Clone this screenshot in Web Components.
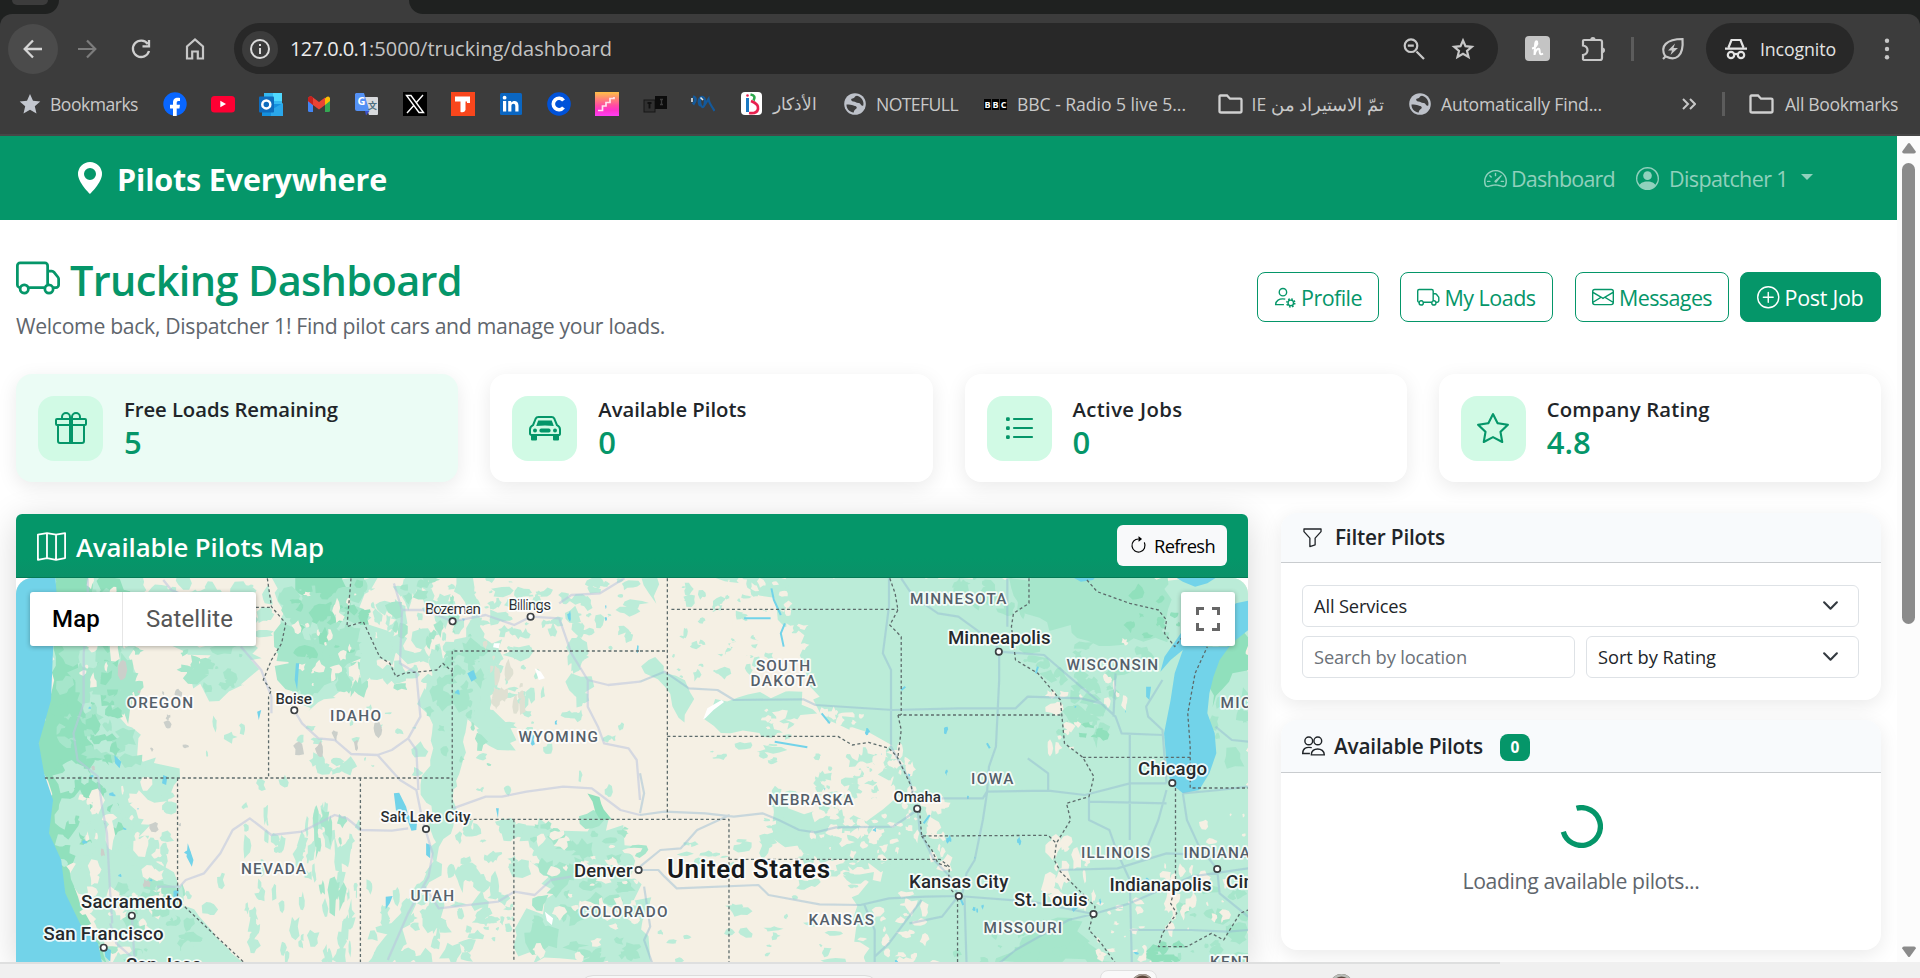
<!DOCTYPE html>
<html lang="en">
<head>
<meta charset="utf-8">
<title>Pilots Everywhere - Trucking Dashboard</title>
<style>
html,body{margin:0;height:100%;overflow:hidden;background:#fff}
body{font-family:"Open Sans","Noto Sans",sans-serif;color:#212529}
</style>
</head>
<body>
<app-window></app-window>
<script>
const define=(name,html,after)=>{
  const t=document.createElement('template');t.innerHTML=html;
  customElements.define(name,class extends HTMLElement{
    constructor(){super();this.attachShadow({mode:'open'}).append(t.content.cloneNode(true));}
    connectedCallback(){if(after)after.call(this,this.shadowRoot);}
  });
};

/* Text set in a box of a given width: tracking takes up the difference. */
define('fit-text','<style>:host{display:inline-block;white-space:pre;flex:none}span{display:inline-block}</style><span><slot></slot></span>',function(r){
  const w=+this.getAttribute('w'),s=r.firstElementChild.nextElementSibling;
  if(this.hasAttribute('size'))this.style.fontSize=this.getAttribute('size')+'px';
  this.style.width=w+'px';
  const nat=s.getBoundingClientRect().width,n=[...this.textContent].length;
  if(this.hasAttribute('scale'))this.style.fontSize=parseFloat(getComputedStyle(this).fontSize)*w/nat+'px';
  else s.style.letterSpacing=(w-nat)/n+'px';
});

const ICONS={
pin:'<path d="M8 16s6-5.686 6-10A6 6 0 0 0 2 6c0 4.314 6 10 6 10m0-7a3 3 0 1 1 0-6 3 3 0 0 1 0 6"/>',
truck:'<path d="M0 3.5A1.5 1.5 0 0 1 1.5 2h9A1.5 1.5 0 0 1 12 3.5V5h1.02a1.5 1.5 0 0 1 1.17.563l1.481 1.85a1.5 1.5 0 0 1 .329.938V10.5a1.5 1.5 0 0 1-1.5 1.5H14a2 2 0 1 1-4 0H5a2 2 0 1 1-3.998-.085A1.5 1.5 0 0 1 0 10.5zm1.294 7.456A2 2 0 0 1 4.732 11h5.536a2 2 0 0 1 .732-.732V3.5a.5.5 0 0 0-.5-.5h-9a.5.5 0 0 0-.5.5v7a.5.5 0 0 0 .294.456M12 10a2 2 0 0 1 1.732 1h.768a.5.5 0 0 0 .5-.5V8.35a.5.5 0 0 0-.11-.312l-1.48-1.85A.5.5 0 0 0 13.02 6H12zm-9 1a1 1 0 1 0 0 2 1 1 0 0 0 0-2m9 0a1 1 0 1 0 0 2 1 1 0 0 0 0-2"/>',
speed:'<path d="M8 4a.5.5 0 0 1 .5.5V6a.5.5 0 0 1-1 0V4.5A.5.5 0 0 1 8 4M3.732 5.732a.5.5 0 0 1 .707 0l.915.914a.5.5 0 1 1-.708.708l-.914-.915a.5.5 0 0 1 0-.707M2 10a.5.5 0 0 1 .5-.5h1.586a.5.5 0 0 1 0 1H2.5A.5.5 0 0 1 2 10m9.5 0a.5.5 0 0 1 .5-.5h1.5a.5.5 0 0 1 0 1H12a.5.5 0 0 1-.5-.5m.754-4.246a.39.39 0 0 0-.527-.02L7.547 9.31a.91.91 0 1 0 1.302 1.258l3.434-4.297a.39.39 0 0 0-.029-.518z"/><path fill-rule="evenodd" d="M0 10a8 8 0 1 1 15.547 2.661c-.442 1.253-1.845 1.602-2.932 1.25C11.309 13.488 9.475 13 8 13c-1.474 0-3.31.488-4.615.911-1.087.352-2.49.003-2.932-1.25A8 8 0 0 1 0 10m8-7a7 7 0 0 0-6.603 9.329c.203.575.923.876 1.68.63C4.397 12.533 6.358 12 8 12s3.604.532 4.923.96c.757.245 1.477-.056 1.68-.631A7 7 0 0 0 8 3"/>',
person:'<path d="M11 6a3 3 0 1 1-6 0 3 3 0 0 1 6 0"/><path fill-rule="evenodd" d="M0 8a8 8 0 1 1 16 0A8 8 0 0 1 0 8m8-7a7 7 0 0 0-5.468 11.37C3.242 11.226 4.805 10 8 10s4.757 1.225 5.468 2.37A7 7 0 0 0 8 1"/>',
gear:'<g fill="none" stroke="currentColor"><circle cx="6.5" cy="4.5" r="2.7"/><path d="M8.2 9.6C3.6 8.7 1.2 11 1.2 13.5h6"/><circle cx="12.2" cy="12.3" r="2"/><circle cx="12.2" cy="12.3" r="2.9" stroke-width="1.1" stroke-dasharray="1.2 1.077"/></g>',
mail:'<path d="M0 4a2 2 0 0 1 2-2h12a2 2 0 0 1 2 2v8a2 2 0 0 1-2 2H2a2 2 0 0 1-2-2zm2-1a1 1 0 0 0-1 1v.217l7 4.2 7-4.2V4a1 1 0 0 0-1-1zm13 2.383-4.708 2.825L15 11.105zm-.034 6.876-5.64-3.471L8 9.583l-1.326-.795-5.64 3.47A1 1 0 0 0 2 13h12a1 1 0 0 0 .966-.741M1 11.105l4.708-2.897L1 5.383z"/>',
plus:'<path d="M8 15A7 7 0 1 1 8 1a7 7 0 0 1 0 14m0 1A8 8 0 1 0 8 0a8 8 0 0 0 0 16"/><path d="M8 4a.5.5 0 0 1 .5.5v3h3a.5.5 0 0 1 0 1h-3v3a.5.5 0 0 1-1 0v-3h-3a.5.5 0 0 1 0-1h3v-3A.5.5 0 0 1 8 4"/>',
gift:'<path d="M3 2.5a2.5 2.5 0 0 1 5 0 2.5 2.5 0 0 1 5 0v.006c0 .07 0 .27-.038.494H15a1 1 0 0 1 1 1v2a1 1 0 0 1-1 1v7.5a1.5 1.5 0 0 1-1.5 1.5h-11A1.5 1.5 0 0 1 1 14.5V7a1 1 0 0 1-1-1V4a1 1 0 0 1 1-1h2.038A3 3 0 0 1 3 2.506zm1.068.5H7v-.5a1.5 1.5 0 1 0-3 0c0 .085.002.274.045.43zM9 3h2.932l.023-.07c.043-.156.045-.345.045-.43a1.5 1.5 0 0 0-3 0zM1 4v2h6V4zm8 0v2h6V4zm5 3H9v8h4.5a.5.5 0 0 0 .5-.5zm-7 8V7H2v7.5a.5.5 0 0 0 .5.5z"/>',
car:'<path d="M4.7 2.5h6.6c.6 0 1.1.3 1.4.9l1.3 3.2c.9.4 1.5 1.3 1.5 2.2v1.9c0 .5-.3.8-.8.8H1.3c-.5 0-.8-.3-.8-.8V8.800c0-1 .6-1.800 1.500-2.200l1.300-3.200c.3-.6.8-.9 1.400-.9Z" fill="none" stroke="currentColor"/><path d="M4.600 4.300h6.800l1 2.700q-4.400-.5-8.800 0zM1 11h3v2.700a.5.5 0 0 1-.5.5h-2a.5.5 0 0 1-.5-.5zM12 11h3v2.700a.5.5 0 0 1-.5.5h-2a.5.5 0 0 1-.5-.5z"/><circle cx="3" cy="9.300" r="1"/><circle cx="13" cy="9.300" r="1"/><rect x="5.200" y="8.300" width="5.600" height="2" rx=".9"/>',
list:'<g><rect x="1.500" y="2.600" width="1.900" height="1.900" rx=".6"/><rect x="1.500" y="7.100" width="1.900" height="1.900" rx=".6"/><rect x="1.500" y="11.600" width="1.900" height="1.900" rx=".6"/><path d="M5.500 3.500h9M5.500 8h9M5.500 12.500h9" stroke="currentColor" stroke-width="1.100" stroke-linecap="round"/></g>',
star:'<path fill-rule="evenodd" d="M2.866 14.85c-.078.444.36.791.746.593l4.39-2.256 4.389 2.256c.386.198.824-.149.746-.592l-.83-4.73 3.522-3.356c.33-.314.16-.888-.282-.95l-4.898-.696L8.465.792a.513.513 0 0 0-.927 0L5.354 5.12l-4.898.696c-.441.062-.612.636-.283.95l3.523 3.356-.83 4.73zm4.905-2.767-3.686 1.894.694-3.957a.56.56 0 0 0-.163-.505L1.71 6.745l4.052-.576a.53.53 0 0 0 .393-.288L8 2.223l1.847 3.658a.53.53 0 0 0 .393.288l4.052.575-2.906 2.77a.56.56 0 0 0-.163.506l.694 3.957-3.686-1.894a.5.5 0 0 0-.461 0z"/>',
map:'<path d="M.5 1.500 5.500.6 10.500 1.500 15.500.6V14.400L10.500 15.400 5.500 14.400.5 15.400ZM5.500.6V14.400M10.500 1.500V15.400" fill="none" stroke="currentColor" stroke-linejoin="round"/>',
funnel:'<path d="M1.500 1.500h13v2l-4.500 5V13.600l-4 1.300V8.500l-4.500-5z" fill="none" stroke="currentColor" stroke-linejoin="round"/>',
people:'<g fill="none" stroke="currentColor"><circle cx="4.700" cy="4.800" r="2.700"/><circle cx="11" cy="4.800" r="2.700"/><path d="M6.500 14.500c-.3-5.500 9-5.500 9 0zM5.500 13.500H.5C.5 10 2.500 8.800 6.800 9.500"/></g>',
refresh:'<path fill-rule="evenodd" d="M8 3a5 5 0 1 0 4.546 2.914.5.5 0 0 1 .908-.417A6 6 0 1 1 8 2z"/><path d="M8 4.466V.534a.25.25 0 0 1 .41-.192l2.36 1.966c.12.1.12.284 0 .384L8.41 4.658A.25.25 0 0 1 8 4.466"/>',
chev:'<path d="m2 5 6 6 6-6" fill="none" stroke="#343a40" stroke-width="2" stroke-linecap="round" stroke-linejoin="round"/>'
};
define('app-icon','<style>:host{display:inline-flex;flex:none}svg{display:block;overflow:visible}</style><svg viewBox="0 0 16 16" fill="currentColor"></svg>',function(r){
  const s=r.querySelector('svg'),z=this.getAttribute('size');
  s.setAttribute('width',z);s.setAttribute('height',z);s.innerHTML=ICONS[this.getAttribute('name')];
});

/* ---------- browser frame ---------- */
/* Lays out [left, width, markup] entries as a flex row, each spaced from the one before. */
const row=items=>{let end=0;return items.map(([x,w,h])=>{const m=x-end;end=x+w;return `<div style="width:${w}px;margin-left:${m}px">${h}</div>`}).join('')};
const svg=(w,h,b,vb)=>`<svg width="${w}" height="${h}" viewBox="${vb||`0 0 ${w} ${h}`}">${b}</svg>`;
const line=(d,c='#c7c7c7',sw=2.2)=>`<path d="${d}" fill="none" stroke="${c}" stroke-width="${sw}"/>`;
const ft=(w,t,size,x='')=>`<fit-text w="${w}" size="${size}" ${x}>${t}</fit-text>`;
const globe=svg(22,22,'<circle cx="11" cy="11" r="10.800" fill="#bdc1c9"/><path d="M2.500 11.500c3 0 5 0 7 1s3 .2 3.300 2.300c-1 2-2.800 1.600-3 4.700C5 19 2.300 15 2.500 11.500ZM13 2.700c-3 .4-2 2.500-4.500 2.800s-1 3 1 3 2.500 1.500 5 1.500 2 3.500 4.800 2.500C20.500 8 17 3.500 13 2.700Z" fill="#3c3c3c"/>');
const folder=svg(25,20,line('M1.500 17.500V2.500Q1.500 1.500 2.500 1.500H9l3 3.200H22Q23.500 4.700 23.500 6V17Q23.500 18.500 22 18.500H3Q1.500 18.500 1.500 17.500Z','#d0d0d0',2.3));
const txt=(x,y,s,t,f='#fff',e='')=>`<text x="${x}" y="${y}" font-size="${s}" fill="${f}" text-anchor="middle" font-weight="700" ${e}>${t}</text>`;

define('browser-tools',`<style>
:host{display:flex;height:51px;padding-top:9px;align-items:center}
div{flex:none;display:flex;align-items:center;justify-content:center}
svg{display:block;flex:none;overflow:visible}
.round{height:50px;border-radius:25px;background:#4b4b4b}
.omni{height:51px;border-radius:26px;background:#282828;justify-content:flex-start;color:#c3c3c3}
.info{height:36px;border-radius:18px;background:#3c3c3c}
.pill{height:51px;border-radius:26px;background:#282828;color:#e3e3e3;justify-content:flex-start}
</style>`+row([
[8,50,'<div class="round" style="width:50px">'+svg(20,20,line('M19 10H2M10 1.500 1.700 10 10 18.500','#d5d5d5',2.3))+'</div>'],
[77,20,svg(20,20,line('M1 10h17M10 1.500l8.300 8.500-8.300 8.500','#7c7c7c'))],
[131,20,svg(20,20,line('M16.800 5A8.200 8.200 0 1 0 18 12M18 1v6.300h-6.500','#cfcfcf',2.3))],
[185,20,svg(20,22,line('M2 20.500V8.500L10 1.500l8 7V20.500H12.800V13.500H7.200V20.500Z'))],
[234,1264,`<div class="omni" style="width:1264px">`+row([
  [8,36,'<div class="info" style="width:36px">'+svg(22,22,'<circle cx="11" cy="11" r="9" fill="none" stroke="#dcdcdc" stroke-width="2"/><path d="M11 10v6M11 6v2" stroke="#dcdcdc" stroke-width="2"/>')+'</div>'],
  [56,79,ft(79,'127.0.0.1',20,'style="color:#ececec"')],[135,243,ft(243,':5000/trucking/dashboard',20)],
  [1169,22,svg(22,22,line('M13.500 13.500 21 21M4.800 7.700h6','#c7c7c7',2.300)+'<circle cx="8" cy="7.700" r="6.300" fill="none" stroke="#c7c7c7" stroke-width="2.200"/>')],
  [1218,22,svg(22,22,line('M11 2.500 13.500 8.200 19.800 8.800 15 12.900 16.500 19 11 15.700 5.500 19 7 12.900 2.200 8.800 8.500 8.200Z'))]
  ])+'</div>'],
[1525,25,svg(25,25,'<rect width="25" height="25" rx="4" fill="#c4c4c4"/><path d="M7 12.500C10 12 13.500 8.500 12 5.500 10 4 10 9 9.500 19 10 14 14 11 14.500 14 14.700 17 14.800 19.500 18 17.500" fill="none" stroke="#fff" stroke-width="2"/>')],
[1580,26,svg(26,26,line('M3 5Q3 4 4 4H20Q22 4 22 6V22Q22 24 20 24H5Q3 24 3 23V19Q7.500 18 7.500 14.200T3 9.500Z')+'<path d="M10.200 4a2.700 2.900 0 0 1 5.400 0ZM22 11.500a3 2.800 0 0 1 0 5.600Z" fill="#c7c7c7"/>')],
[1631,3,svg(3,24,'<rect width="3" height="24" fill="#5c5c5c"/>')],
[1661,24,svg(24,24,line('M2 22 5.500 18.500M4.500 20C-2 9 6 2 21.500 2 23 20 14 24 5.500 19.800')+'<path d="M14 6.500 7 13.500h4L9.500 18l7.500-7h-4.500Z" fill="#c7c7c7"/>')],
[1706,148,'<div class="pill" style="width:148px">'+row([[19,22,svg(22,22,'<path d="M0 10.700H22M3.500 9.500 6.500 2h9l3 7.500" fill="none" stroke="#e3e3e3" stroke-width="2.200"/><g fill="none" stroke="#e3e3e3" stroke-width="2.200"><circle cx="6" cy="17" r="3.200"/><circle cx="16" cy="17" r="3.200"/><path d="M9 16h4"/></g>')],[54,76,ft(76,'Incognito',17.8)]])+'</div>'],
[1884,6,svg(6,22,'<g fill="#c7c7c7"><circle cx="3" cy="2.700" r="2.200"/><circle cx="3" cy="11" r="2.200"/><circle cx="3" cy="19.300" r="2.200"/></g>')]
]));

define('bookmark-bar',`<style>
:host{display:flex;height:60px;align-items:center;color:#c9c9c9}
div{flex:none;display:flex;align-items:center;justify-content:center}
fit-text{margin-top:-1px}
svg{display:block;flex:none}
</style>`+row([
[19,22,svg(22,22,'<path d="M11 1 14 7.800 21.300 8.500 15.800 13.300 17.500 20.500 11 16.700 4.500 20.500 6.200 13.300.7 8.500 8 7.800Z" fill="#c3c7cf"/>')],
[50,88,ft(88,'Bookmarks',17.6)],
[163,24,svg(24,24,'<circle cx="12" cy="12" r="11.700" fill="#0866ff"/><path d="M10 24v-7.500H7v-3.700h3V11c0-4 2-5.700 7-5v3c-2.500-.2-3.300.2-3.300 2v1.800h3.300l-.6 3.700h-2.700V24Z" fill="#fff"/>')],
[211,24,svg(24,24,'<rect y="4" width="24" height="16.500" rx="3.500" fill="#f03"/><path d="M9.300 8.800 15 12l-5.700 3.300Z" fill="#fff"/>')],
[259,24,svg(24,24,'<rect x="5" y="1" width="18" height="12" fill="#35b8f1"/><rect x="14" y="1" width="9" height="8" fill="#50d9ff"/><path d="M3 12h20v12H3Z" fill="#1490df"/><path d="M12 18 24 11v13H12Z" fill="#2aa7ea"/><rect y="4.500" width="15" height="16" rx="1" fill="#0f6cbd"/><circle cx="7.300" cy="12.400" r="4" fill="none" stroke="#fff" stroke-width="2.500"/>')],
[308,22,svg(22,16,'<path d="M0 3 5 6V16H1.500Q0 16 0 14.500Z" fill="#4285f4"/><path d="M22 3 17 6V16h3.500Q22 16 22 14.500Z" fill="#34a853"/><path d="M17 2.500Q20-1 22 2V5l-5 4Z" fill="#fbbc04"/><path d="M0 5V2Q2-1 5 1.500L11 6l6-4.500V9l-6 4.500L5 9Z" fill="#ea4335"/><path d="M0 5V2Q2-1 5 1.500V9Z" fill="#c5221f"/>')],
[355,24,svg(24,24,'<path d="M8 5H22q1 0 1 1V22q0 1-1 1H14Z" fill="#d8dadd"/><path d="M1 1H9l5.500 18H2Q0 19 0 17V2Z" fill="#5491f5"/><path d="M10 19h4.500L11 23.500Z" fill="#3a50cc"/>'+txt(6.5,13,11,'G')+txt(17.500,17,9,'文','#4f6f80','font-family="Noto Sans CJK SC"'))],
[403,24,svg(24,24,'<rect width="24" height="24" fill="#000"/><path d="M3.500 3.500H8L20.500 20.500H16ZM20 3 13 11M11 13.200 4 21" stroke="#fff" stroke-width="1.400" fill="none"/>')],
[451,24,svg(24,24,'<rect width="24" height="24" fill="#f9461c"/><path d="M4 4.500H19V11H16v-1.500h-1.500V18q-1 3-5 2V9.500H4Z" fill="#fff"/>')],
[500,22,svg(22,22,'<rect width="22" height="22" rx="1.500" fill="#0a66c2"/><path d="M3 8h3.200v10.500H3ZM8.200 8h3v1.500C13 7 18.500 7 18.500 12.500v6h-3.200V13c0-3.300-3.900-3-3.900 0v5.500H8.200Z" fill="#fff"/><circle cx="4.600" cy="4.700" r="1.900" fill="#fff"/>')],
[547,24,svg(24,24,'<circle cx="12" cy="12" r="11.800" fill="#0052d9"/><path d="M16.500 8.500A5.700 5.700 0 1 0 16.500 15.500" fill="none" stroke="#fff" stroke-width="3.600"/>')],
[595,24,svg(24,24,'<defs><linearGradient id="g" x2="0" y2="1"><stop offset="0" stop-color="#ffc047"/><stop offset=".55" stop-color="#ff4ea0"/><stop offset=".75" stop-color="#ff32c8"/><stop offset="1" stop-color="#ff3ff5"/></linearGradient></defs><rect width="24" height="24" fill="url(#g)"/><path d="M3 18.500H7.500V14H11V10.500H15V6.500H19V5" fill="none" stroke="#ffe3ee" stroke-width="1.700"/>')],
[643,24,svg(24,24,'<rect x="1" y="8" width="11" height="12" fill="#303030" stroke="#161616"/><rect x="12" y="4" width="12" height="13" fill="#0c0c0c"/><path d="M4.500 11h4M6.500 11v5.500" stroke="#111" stroke-width="1.800"/><path d="M17 7.500h3M18.500 7v6M17 12.500h3" stroke="#3c3c3c" stroke-width="1.300"/>')],
[691,24,svg(24,24,'<path d="M2 4.500q5 2 0 8" fill="none" stroke="#14599a" stroke-width="2.800"/><path d="M9 14C6 9 9 4 12 5S14 14 12 15 8 9 10 6M13 14 17.500 7C18 12 21 14 23.500 19" fill="none" stroke="#14599a" stroke-width="2.200"/><path d="M1 6v4M9.500 5.500 12 8" stroke="#dfeaf2" stroke-width="1.600"/>')],
[740.500,22,svg(22,24,'<rect width="21" height="23" rx="4" fill="#fff"/><path d="M6.500 6v14" stroke="#1a78c2" stroke-width="3"/><circle cx="6.500" cy="3.500" r="1.300" fill="#e8214f"/><path d="M9.500 2.500q6 1 3 6" stroke="#2da84c" stroke-width="2.700" fill="none"/><path d="M10 9q8 3 7 8t-9 4" stroke="#e8214f" stroke-width="2.700" fill="none"/>')],
[773,44,ft(44,'الأذكار',17,'scale')],
[844,22,globe],[876,82,ft(82,'NOTEFULL',17.6)],
[984,23,svg(23,11,'<g fill="#000"><rect width="7" height="11"/><rect x="8" width="7" height="11"/><rect x="16" width="7" height="11"/></g>'+txt(3.500,8.800,9,'B')+txt(11.500,8.800,9,'B')+txt(19.500,8.800,9,'C'))],
[1017,169,ft(169,'BBC - Radio 5 live 5...',17.6)],
[1218,25,folder],[1253,131,ft(131,'تمّ الاستيراد من IE',17,'scale dir="rtl"')],
[1409,22,globe],[1441,161,ft(161,'Automatically Find...',17.6)],
[1682,14,svg(14,12,line('M1 1 6 6 1 11M8 1l5 5-5 5','#c7c7c7',2))],
[1722,3,svg(3,24,'<rect width="3" height="24" fill="#5c5c5c"/>')],
[1749,25,folder],[1785,113,ft(113,'All Bookmarks',17.6)]
]));

define('browser-chrome',`<style>
:host{display:block;height:136px;background:#1f2120}
.tabs{height:14px;display:flex}
.tabs i{height:14px;width:59px;border-radius:0 0 17px 0;background:#1f2120}
.tabs b{display:block;width:36px;height:5px;margin-left:12px;border-radius:0 0 14px 14px;background:#3c3c3c}
.tabs u{flex:1;margin-left:350px;background:#1f2120;border-radius:0 0 0 17px}
.top{background:linear-gradient(#3c3c3c,#3c3c3c) 40px 0/390px 14px no-repeat}
.bar{height:120px;background:#3c3c3c;border-radius:12px 12px 0 0;border-bottom:2px solid #474747}
</style><div class="top"><div class="tabs"><i><b></b></i><u></u></div></div><div class="bar"><browser-tools></browser-tools><bookmark-bar></bookmark-bar></div>`);

/* ---------- page ---------- */
define('site-nav',`<style>
:host{display:flex;align-items:center;height:84px;background:#059669;color:#fff;padding:0 0 0 74px;box-sizing:border-box}
.brand{font-weight:700;margin:2px 0 0 11px;flex:none}
.links{margin-left:auto;margin-right:84px;display:flex;align-items:center;color:rgba(255,255,255,.56)}
.caret{border:6px solid transparent;border-top-color:currentColor;border-bottom:0;margin:-2px 0 0 13px}
</style><app-icon name="pin" size="32"></app-icon><fit-text class="brand" w="270" size="30.500">Pilots Everywhere</fit-text>
<div class="links"><app-icon name="speed" size="23"></app-icon><fit-text w="104" size="21.500" style="margin-left:4px">Dashboard</fit-text><app-icon name="person" size="23" style="margin-left:21px"></app-icon><fit-text w="119" size="21.500" style="margin-left:10px">Dispatcher 1</fit-text><span class="caret"></span></div>`);

define('action-button',`<style>
:host{display:inline-flex;align-items:center;box-sizing:border-box;height:50px;border:1.500px solid #059669;border-radius:8px;color:#059669;gap:5px;padding:0 0 0 16px;font-size:21.500px;background:#fff;flex:none}
:host([solid]){background:#059669;color:#fff}
</style><slot></slot>`);

define('page-head',`<style>
:host{display:flex;justify-content:space-between;align-items:flex-start;height:154px}
.title{display:flex;align-items:center;color:#059669;font-weight:600;height:52px;margin-top:34px;line-height:52px}
.title app-icon{margin-right:10px;margin-top:-5px}
.sub{color:#5f666d;line-height:30px;margin-top:5px}
.acts{display:flex;margin-top:52px}
</style><div><div class="title"><app-icon name="truck" size="44"></app-icon><fit-text w="392" size="41.500">Trucking Dashboard</fit-text></div><fit-text class="sub" w="649" size="21.200">Welcome back, Dispatcher 1! Find pilot cars and manage your loads.</fit-text></div>
<div class="acts"><action-button style="width:122px"><app-icon name="gear" size="22"></app-icon><fit-text w="61">Profile</fit-text></action-button>
<action-button style="width:153px;margin-left:21px"><app-icon name="truck" size="22.500"></app-icon><fit-text w="91">My Loads</fit-text></action-button>
<action-button style="width:154px;margin-left:22px"><app-icon name="mail" size="22"></app-icon><fit-text w="93">Messages</fit-text></action-button>
<action-button solid style="width:141px;margin-left:11px"><app-icon name="plus" size="22.500"></app-icon><fit-text w="79">Post Job</fit-text></action-button></div>`);

define('stat-card',`<style>
:host{display:flex;align-items:center;box-sizing:border-box;height:108px;border-radius:16px;background:#fff;padding-left:22px;box-shadow:0 5px 20px rgba(0,0,0,.085)}
:host([accent]){background:#ebfcf5}
.ic{width:65px;height:65px;border-radius:16px;background:#d1fae5;color:#059669;display:flex;align-items:center;justify-content:center;margin:0 21px 0 0;flex:none}
.t{font-size:20.300px;font-weight:600;color:#212529;line-height:27px;display:block;margin-top:1px}
.v{font-size:31px;font-weight:600;color:#059669;line-height:38px;display:block}
</style><div class="ic"><slot name="icon"></slot></div><div><span class="t"><slot></slot></span><span class="v"><slot name="value"></slot></span></div>`);

define('panel-card',`<style>
:host{display:block;background:#fff;border-radius:16px;box-shadow:0 5px 20px rgba(0,0,0,.085);overflow:hidden;box-sizing:border-box}
header{display:flex;align-items:center;height:var(--head,49px);box-sizing:border-box;padding:0 21px 1px;background:#f8fafc;border-bottom:1.500px solid #c9cccf;font-size:20.800px;font-weight:600;color:#212529}
</style><header><slot name="head"></slot></header><slot></slot>`);

define('form-field',`<style>
:host{display:flex;align-items:center;justify-content:space-between;box-sizing:border-box;height:42px;border:1.500px solid #dee2e6;border-radius:6px;padding:0 19px 1px 11px;font-size:18.300px;color:#212529}
:host([ghost]){color:#6b7178}
</style><slot></slot>`);

define('filter-panel',`<style>
:host{display:block}
panel-card{height:187px}
.g{display:grid;grid-template-columns:1fr 1fr;gap:9px 11px;padding:22px 22px 22px 21px}
.g>:first-child{grid-column:1/3}
</style><panel-card style="--head:50px"><app-icon slot="head" name="funnel" size="21"></app-icon><fit-text slot="head" w="110" style="margin-left:12px">Filter Pilots</fit-text>
<div class="g"><form-field><fit-text w="93">All Services</fit-text><app-icon name="chev" size="17"></app-icon></form-field>
<form-field ghost><fit-text w="153">Search by location</fit-text></form-field><form-field><fit-text w="118">Sort by Rating</fit-text><app-icon name="chev" size="17"></app-icon></form-field></div></panel-card>`);

define('pilot-panel',`<style>
:host{display:block;margin-top:20px}
panel-card{height:230px}
.badge{background:#059669;color:#fff;border-radius:8px;width:30px;height:27px;font:700 15.500px/27px "Open Sans";text-align:center;margin:3px 0 0 17px}
.body{display:flex;flex-direction:column;align-items:center;padding-top:32px;color:#5f666d}
.spin{width:43px;height:43px}
</style><panel-card style="--head:53px"><app-icon slot="head" name="people" size="23"></app-icon><fit-text slot="head" w="149" style="margin-left:9px">Available Pilots</fit-text><span slot="head" class="badge">0</span>
<div class="body"><svg class="spin" viewBox="-21.500 -21.500 43 43"><path d="M-5 -18.200A18.900 18.900 0 1 1 -18.200 5.200" fill="none" stroke="#059669" stroke-width="5.300"/></svg><fit-text w="237" size="21.200" style="margin-top:18px;line-height:30px">Loading available pilots...</fit-text></div></panel-card>`);

/* Map geography is kept in two drawing grids, west and east. */
let seed=11;const rnd=()=>(seed=(seed*16807)%2147483647)/2147483647;
const blob=(x,y,rx,ry,n=9)=>{let d='';for(let i=0;i<n;i++){const a=i/n*6.283,k=.45+rnd()*.9;d+=(i?'L':'M')+(x+Math.cos(a)*rx*k).toFixed(1)+' '+(y+Math.sin(a)*ry*k).toFixed(1);}return d+'Z'};
const rough=(p,amp=14)=>{let out=[];for(let i=0;i<p.length;i++){const a=p[i],b=p[(i+1)%p.length],L=Math.hypot(b[0]-a[0],b[1]-a[1]),n=Math.max(1,Math.round(L/26));for(let j=0;j<n;j++){const t=j/n,k=j?amp:amp*.3;out.push((a[0]+(b[0]-a[0])*t+(rnd()-.5)*2*k).toFixed(1)+' '+(a[1]+(b[1]-a[1])*t+(rnd()-.5)*2*k).toFixed(1));}}return 'M'+out.join('L')+'Z'};
const pts=s=>s.split(' ').map(q=>q.split(',').map(Number));
const area=(s,f,amp)=>`<path d="${rough(pts(s),amp)}" fill="${f}"/>`;
const scatter=(x0,y0,x1,y1,n,f,r,tall=1)=>{let d='';for(let i=0;i<n;i++){const q=r*(.3+rnd());d+=blob(x0+rnd()*(x1-x0),y0+rnd()*(y1-y0),q*(.5+rnd()*.8),q*tall*(.5+rnd()*.9));}return `<path d="${d}" fill="${f}"/>`};
const G='#bbecd8',M='#a6e6cb',D='#90e0bc',B='#f5f0e4',W='#72d3e9',Y='#cbcfca';
const west=()=>
 area('120,225 360,225 330,300 340,380 320,470 330,560 290,640 340,700 350,780 420,800 425,920 300,870 370,980 340,1040 420,1120 440,1180 520,1290 600,1400 250,1400 200,1200 150,1060',G,22)+
 area('135,225 220,225 230,330 180,420 200,600 230,760 260,860 190,980 150,1060 110,1040 130,900 108,820 95,730 125,600 132,450',D,10)+
 area('150,1060 190,1190 245,1330 260,1390 210,1330 160,1200 140,1080',D,5)+
 area('235,240 290,240 320,330 290,420 300,560 270,620 240,560 230,420',D,18)+
 scatter(150,250,340,800,60,M,26,1.4)+scatter(120,600,290,1060,36,D,24,1.2)+scatter(150,780,420,1150,70,G,24,1.1)+scatter(200,820,400,1360,46,B,15,1.6)+scatter(240,1150,480,1390,34,M,18)+
 scatter(190,240,340,560,22,B,13,2)+
 area('420,430 600,410 640,470 600,560 540,600 470,540 520,470',G,20)+scatter(340,240,660,420,46,G,20)+scatter(440,430,600,600,20,M,18)+
 area('660,225 930,225 880,330 960,440 1040,480 900,470 860,520 820,600 760,640 720,560 700,400 680,300',G,22)+
 area('710,225 850,225 850,310 800,370 730,360 760,300',D,20)+area('690,420 820,420 900,480 800,560 730,560',M,20)+scatter(700,240,900,580,50,M,26,1.2)+scatter(720,240,900,500,22,D,18)+scatter(700,240,960,560,24,B,12,1.5)+
 scatter(900,230,1180,560,70,G,23,1.4)+scatter(960,230,1170,560,30,M,13,1.5)+scatter(1180,230,1568,420,55,G,17,.9)+
 area('1030,600 1110,420 1230,420 1220,520 1190,600 1250,680 1280,780 1200,740 1150,660 1140,760 1110,900 1100,1000 1080,1090 1040,1160 1010,1250 960,1390 900,1390 1010,1200 1060,1080 1060,920 1030,850 1060,700',G,16)+
 scatter(1050,440,1200,800,32,M,19,1.4)+scatter(1180,430,1320,700,24,G,19)+scatter(1180,430,1300,620,18,'#dfe0d2',12,1.8)+
 scatter(1390,440,1430,660,13,G,26,1.2)+scatter(340,640,660,1400,20,G,13,2)+scatter(600,900,880,1390,62,G,11,3.4)+scatter(660,600,1030,860,24,G,15)+scatter(760,950,840,1250,12,M,12,3)+
 scatter(1100,970,1280,1160,30,G,22)+scatter(900,1160,1110,1390,32,G,19,1.5)+scatter(1120,1180,1260,1390,28,G,16)+
 area('1290,980 1490,960 1568,1040 1568,1390 1310,1390 1270,1300 1330,1200 1370,1110 1300,1060',G,28)+scatter(1300,960,1568,1390,56,M,23)+scatter(1290,980,1560,1390,40,B,17)+area('1440,880 1470,890 1480,930 1500,960 1470,960',D,8)+
 scatter(1150,300,1560,960,18,G,10,1.4)+
 scatter(210,560,500,1180,13,Y,11,1.4)+scatter(700,700,980,800,4,Y,12,1.7)+`<path d="${blob(925,690,14,24)}${blob(300,510,12,45)}" fill="${Y}"/>`+
 `<path d="M20 225H135L140 300 130 450 125 600 95 730 108 820 130 900 120 1000 150 1080 160 1180 200 1280 240 1330 252 1400H20Z" fill="${W}"/>`+
 `<path d="M965 880 978 878 995 920 1000 945 1022 965 1020 990 1008 992 1000 965 970 930ZM1044 1030 1055 1035 1054 1075 1044 1065ZM460 1030 474 1080 470 1100 457 1070ZM425 1172 438 1170 435 1195 425 1190ZM945 1190 962 1188 955 1210 945 1228ZM1145 520 1160 510 1168 535 1155 545ZM725 490 733 490 728 570 722 540ZM280 765 297 785 293 805 282 790ZM400 825 410 830 407 855 397 850ZM630 635 640 630 634 660ZM255 1340 272 1350 270 1385 258 1370ZM1215 925 1222 925 1220 955Z" fill="${W}"/>`+scatter(200,600,480,1200,9,W,7)+scatter(1000,250,1568,800,9,W,6,2)+
 `<path d="M1310 505 1325 515 1335 535 1320 540ZM1335 1235 1355 1255 1352 1275 1340 1262ZM1210 430 1225 430 1222 445 1208 442Z" fill="#fff"/>`;
const east=()=>
 area('170,225 1500,225 1500,1400 560,1400 520,1260 540,1180 600,1110 400,1060 320,1000 350,920 560,960 640,900 600,800 620,740 560,700 440,680 420,560 390,470 400,400 330,330 250,250',G,20)+
 area('0,500 40,470 60,520 110,540 130,600 110,670 80,620 60,560',G,10)+area('180,600 260,580 400,580 430,640 330,700 200,700 160,660',G,16)+
 scatter(70,230,400,560,42,G,15)+scatter(300,620,560,720,26,B,15)+scatter(160,240,400,570,62,B,15,1)+scatter(430,740,680,900,46,G,16)+scatter(300,860,560,1080,30,G,22)+scatter(420,750,680,1010,64,B,13,1.3)+scatter(420,960,640,1100,32,B,12)+scatter(690,900,760,1110,15,B,14,1.5)+
 scatter(380,1060,700,1160,24,G,24,.7)+scatter(540,1180,700,1390,22,B,15)+scatter(30,1190,540,1390,20,G,21,.7)+scatter(80,690,380,800,11,G,20,.6)+scatter(100,1000,300,1100,10,G,18,.6)+area('5,235 40,235 40,310 20,280',G,8)+
 area('900,225 1290,225 1290,430 1230,420 1150,440 1060,400 980,350 930,320',M,18)+scatter(780,225,940,340,18,M,24)+scatter(1200,230,1330,440,12,D,14)+scatter(940,430,1240,530,15,M,20)+scatter(1030,520,1170,720,32,M,19,1.3)+scatter(1080,640,1140,710,5,D,11)+scatter(1000,560,1090,750,13,B,14,1.3)+scatter(1140,520,1190,630,6,B,11,2)+scatter(1180,420,1200,440,2,B,12)+
 scatter(1360,400,1500,800,22,M,20,1.5)+area('1420,450 1480,400 1500,500 1450,520 1400,620 1395,560',D,12)+
 area('850,1400 920,1340 1000,1300 1080,1260 1100,1330 1160,1390',M,18)+scatter(760,1250,1080,1390,18,M,22)+scatter(1250,1330,1320,1390,8,D,22)+scatter(1320,1150,1490,1390,26,M,18)+scatter(1280,1080,1440,1290,28,B,9,1.8)+scatter(1000,1000,1120,1240,20,B,12,2)+scatter(1090,1200,1250,1390,20,B,11)+scatter(1380,940,1490,1080,8,B,10)+
 `<path d="M1315 234H1410L1390 250 1360 260 1330 245ZM1050 225 1120 225 1110 240 1080 245Z" fill="${W}"/>`+
 `<path d="M1325 400 1390 440 1440 440 1450 390 1420 360 1460 310 1500 300 1500 380 1450 430 1420 480 1405 530 1395 580 1390 640 1408 700 1412 760 1395 820 1370 870 1330 880 1300 850 1290 790 1284 700 1300 600 1310 520 1330 450 1300 480 1275 515 1285 470ZM1240 560 1252 560 1248 600 1240 590Z" fill="${W}"/>`+
 `<path d="M322 265 328 300 345 345M355 370 345 400 352 440M320 355H255M445 640 465 670M330 725 410 742M780 1180 792 1215M850 730 857 745M695 970 710 945M650 560 640 570M970 520 975 500" fill="none" stroke="${W}" stroke-width="2" vector-effect="non-scaling-stroke"/>`+
 scatter(450,600,1250,1390,24,W,5,1.8)+`<path d="M155 658 165 625 200 600 206 606 180 630 160 655Z" fill="#fff"/>`;
const roadsW='M215 235V340L205 460 205 610 180 700 190 780 240 830 250 920 262 1000 270 1180 275 1270M385 1160H440L455 1140 500 1120 540 1060 570 990 612 955 665 1005 740 995 820 945 850 955 885 990 960 992 1000 985M590 440 640 510 665 590 665 640M721 631 740 670 780 715 820 720 860 762 925 765 960 750 1000 715 1030 650 1020 520 980 490 985 330 965 250M925 765 980 840 1020 870 1035 960 1060 1060 1050 1130 1000 1240 950 1380M1000 715 1020 750 1025 870M985 330 1040 330 1110 364 1190 345 1260 375 1300 350 1370 355 1400 460 1440 540 1440 620 1465 680 1480 730 1540 745 1560 780 1568 900M1370 310 1400 285 1470 280 1530 235M400 240 420 270 480 300 590 330M1440 540 1490 555 1568 545M1110 925 1190 890 1230 890 1290 875 1380 860 1450 865 1520 930 1568 945M1040 1160 1075 1225 1220 1205 1260 1175 1310 1185 1350 1140 1400 1130M270 1270 285 1330 340 1390M323 1247 330 1390';
const roadsE='M0 545 60 515 120 565 190 570 230 600 400 598 430 615 620 630 780 625 920 625 950 590 1080 595 1130 610 1165 650 1180 700 1280 705M610 235 610 320 595 460 615 510 615 740 660 840 680 925 685 990 720 1080 760 1130 780 1188M640 235 670 290 730 340 780 350 870 430 880 455 880 540 872 740 855 800 850 880 840 960 820 1080 800 1120 790 1180M900 235 900 380M880 455 990 465 1080 560 1130 610M680 895H840L850 875 1000 872 1090 885 1200 850 1290 850M1000 872 1000 820 950 775M0 945 60 935 160 940 230 950 300 940 340 960 390 990 430 997 480 982 620 980 680 930M0 1110H45L60 1130 90 1165 290 1155 315 1185 440 1213 540 1215 610 1195 700 1190 780 1188 960 1205 1111 1242 1200 1210 1350 1130 1490 1105M550 1215 575 1290 575 1370 610 1330 690 1200M575 1370V1390M1111 1242 1050 1260 920 1350 880 1390M1100 890V960L1150 990 1170 1060 1200 1140 1205 1390M1165 520 1160 650M1280 540 1240 620 1245 650 1280 690 1290 850M1200 700V880L1200 1020M1290 870 1270 960 1230 1080M1330 880 1340 960 1370 1040 1414 1107 1420 1180 1490 1250M1330 880 1420 870 1490 860M1200 1290 1350 1290 1440 1295 1490 1290M0 820 10 880 0 940M220 945 140 990 100 1045 50 1050 0 1100M30 1390 10 1320 25 1280 10 1160M1100 905 1290 910M1410 680 1450 720 1490 725M660 1270 740 1250 780 1188M795 1190 800 1390M1030 1110 1170 1105 1290 1060 1490 1070';
const bordW='M655 235 665 320 700 370 690 430 665 480 645 540 665 570 658 590V834M600 322H665M110 834H1108M435 834V1200L600 1390M883 834V1390M1108 925V453H1568M860 235 850 380 890 365 930 470 955 490 970 530 990 520 1070 510 1085 490 1108 515M1120 958H1568M1259 958V1390';
const bordE='M67 235V958M0 453H67M77 328H632M612 235 625 280 632 330 612 375 640 410V645M632 645H1032M67 709H485L520 735 560 727 610 745 630 770 665 860 670 905M632 645 640 690 632 770M0 958H218V1390M218 1078H735L758 1100 755 1160 778 1190V1390M685 930 690 1008 1000 1006 1020 1030M690 1008 715 1050 730 1090 755 1100M953 235V310L915 340 910 380 920 480 975 520 1030 600 1040 730 1085 772 1112 830 1100 890 1045 910 1055 960 1020 1030 1015 1080 1030 1115 1075 1170 1115 1220 1100 1290 1130 1330 1165 1390M1085 772H1348V740L1342 640 1360 520 1390 440M1348 772V864H1490M1312 864V1160L1300 1210 1315 1240 1280 1300 1270 1340 1340 1340 1400 1300 1430 1320 1470 1240 1490 1230M1095 240 1120 275 1200 310 1270 330 1290 360 1285 400 1310 440 1330 410';
const cities=[[425,481,614,'Bozeman'],[508.5,551,609.5,'Billings'],[275.5,312,704,'Boise',500],[380.5,470.5,822,'Salt Lake City',500],[893.5,941,802,'Omaha',500]];
const big=[[574,632.5,877,'Denver'],[81,182.5,908,'Sacramento'],[43.5,163.5,940,'San Francisco'],[126,201.5,971,'San Jose'],[948,1050.5,644,'Minneapolis'],[1138,1207,775,'Chicago'],[909,1008.5,888,'Kansas City'],[1014,1087.5,906,'St. Louis'],[1109.5,1211.5,890.5,'Indianapolis'],[1226,1254,887.5,'Cin']];
const states=[[126.5,193,708,'OREGON'],[330,381,721,'IDAHO'],[518.5,598,742,'WYOMING'],[241,306,873.5,'NEVADA'],[410.5,454,901,'UTAH'],[579.5,667.5,917,'COLORADO'],[910,1006.5,604,'MINNESOTA'],[756,810,671,'SOUTH'],[750.5,816,686,'DAKOTA'],[1066.5,1158,669.5,'WISCONSIN'],[1220.5,1251,708,'MIC'],[971,1013.5,784,'IOWA'],[768,853.5,805,'NEBRASKA'],[1081,1150,857.5,'ILLINOIS'],[1183.5,1250,857.5,'INDIANA'],[808.5,874,925,'KANSAS'],[983.5,1062,932.5,'MISSOURI'],[1210,1252,967,'KENT']];
const lab=(a,c)=>a.map(([x,x2,y,t,w])=>`<text class="${c}" x="${x}" y="${y}" textLength="${x2-x}" ${w?`font-weight="${w}"`:''}>${t}</text>`).join('');
const dots=[[452.6,621.3],[530.6,616.7],[294.3,710.3],[426,829],[638.6,870],[131.800,915.700],[103.700,947.700],[998.800,651.700],[1172.300,783],[917.200,808.700],[958.800,896],[1093.500,914],[1217.200,869]].map(([x,y])=>`<circle cx="${x}" cy="${y}" r="3.200" fill="#fff" stroke="#3c4043" stroke-width="1.700"/>`).join('');
define('map-canvas',`<style>
:host{display:block;height:384px;border-radius:16px 16px 0 0;overflow:hidden;background:${B}}
svg{display:block}
.r path{fill:none;vector-effect:non-scaling-stroke;stroke-linejoin:round}
text{font-family:Roboto,sans-serif;paint-order:stroke;stroke:rgba(255,255,255,.85);stroke-width:3.500px;stroke-linejoin:round}
.s{font-size:15.300px;fill:#55606a;font-weight:500}.c{font-size:15.200px;fill:#2b2f33}.b{font-size:18.700px;fill:#26292d;font-weight:500}
.u{font-size:26px;fill:#17191c;font-weight:600}
</style><svg width="1232" height="384" viewBox="16 578 1232 384"><rect x="16" y="578" width="1232" height="384" fill="${B}"/>
<g class="w" transform="translate(0 500) scale(.40816 .33333)"></g><g class="e" transform="translate(640 500) scale(.40816 .33333)"></g>
<g class="r" transform="translate(0 500) scale(.40816 .33333)"><path d="${roadsW}" stroke="#b9c4de" stroke-opacity=".55" stroke-width="2.300"/><path d="${bordW}" stroke="#5d6b6b" stroke-width="1.300" stroke-dasharray="3 2.500"/></g>
<g class="r" transform="translate(640 500) scale(.40816 .33333)"><path d="${roadsE}" stroke="#93b8d2" stroke-opacity=".45" stroke-width="2.200"/><path d="${bordE}" stroke="#5d6b6b" stroke-width="1.300" stroke-dasharray="3 2.500"/></g>
${dots}${lab(states,'s')}${lab(cities,'c')}${lab(big,'b')}${lab([[667,830,878,'United States']],'u')}</svg>`,function(r){
  r.querySelector('.e').innerHTML=east();
  r.querySelector('.w').innerHTML=west();
});

define('map-panel',`<style>
:host{display:block;width:1232px;height:448px;background:#fff;border-radius:6px 6px 0 0;box-shadow:0 6px 34px rgba(0,0,0,.16);position:relative}
header{display:flex;align-items:center;justify-content:space-between;height:64px;box-sizing:border-box;padding:0 21px;background:linear-gradient(#059669 70%,#0a9168);border-bottom:1px solid #057a55;border-radius:6px 6px 0 0;color:#fff}
.h{display:flex;align-items:center;font-weight:600;gap:10px;margin-top:2px}
.rf{display:flex;align-items:center;box-sizing:border-box;width:110px;height:41px;margin-top:-1px;padding-left:12px;gap:6px;border-radius:6px;background:#f8f9fa;color:#000}
.type,.full{position:absolute;top:78px;height:54px;background:#fff;border-radius:3px;box-shadow:0 1px 5px rgba(0,0,0,.3);display:flex;align-items:center;font-family:Roboto,sans-serif}
.type{left:14px;width:226px;font-size:24px;color:#565656}
.type b{font-weight:500;color:#000;display:flex;align-items:center;width:70px;height:54px;padding-left:22px;border-right:1.500px solid #e6e6e6}
.type fit-text{line-height:54px}
.type>fit-text{margin-left:23px}
.full{right:13px;width:54px;justify-content:center}
</style><header><div class="h"><app-icon name="map" size="29"></app-icon><fit-text w="248" size="25.800">Available Pilots Map</fit-text></div><div class="rf"><app-icon name="refresh" size="19"></app-icon><fit-text w="61" size="18.300">Refresh</fit-text></div></header>
<map-canvas></map-canvas><div class="type"><b><fit-text w="48">Map</fit-text></b><fit-text w="87">Satellite</fit-text></div>
<div class="full"><svg width="24" height="24"><path d="M1.500 8V1.500H8M16 1.500h6.500V8M22.500 16v6.500H16M8 22.500H1.500V16" fill="none" stroke="#666" stroke-width="3"/></svg></div>`);

define('scroll-bar',`<style>
:host{display:flex;flex-direction:column;align-items:center;width:23px;background:#fcfcfc;box-sizing:border-box;padding:6px 0 4px}
i{width:13px;height:461px;border-radius:7px;background:#8b8b8b;margin:9px 0 auto}
svg{display:block}
</style><svg width="16" height="12"><path d="M7 1.500Q8 .3 9 1.500L14.800 9.500Q15 11.500 13 11.500H3Q1 11.500 1.200 9.500Z" fill="#8b8b8b"/></svg><i></i><svg width="16" height="12"><path d="M7 10.500Q8 11.700 9 10.500L14.800 2.500Q15 .5 13 .5H3Q1 .5 1.200 2.500Z" fill="#8b8b8b"/></svg>`);

define('task-strip',`<style>
:host{display:flex;height:16px;overflow:hidden;background:linear-gradient(#dedfdf,#dedfdf) 0 0/1500px 2px no-repeat,#f0f0f0}
.a{flex:none;width:300px;height:30px;margin:13px 0 0 579px;border:1.500px solid #dcdcdc;border-radius:14px;background:#f6f6f6;box-sizing:border-box}
.b{flex:none;width:57px;height:40px;margin:8px 0 0 221px;border:1.500px solid #e0e0e0;border-radius:8px;background:#f9f9f9;box-sizing:border-box;padding:3px 0 0 30px}
i{display:block;width:23px;height:23px;border-radius:12px;background:#5b4538;box-shadow:inset 0 0 0 1.500px #a9a097}
.c{margin:12px 0 0 173px;background:#5a4a40;box-shadow:inset 0 0 0 2.500px #b9bdb8}
</style><div class="a"></div><div class="b"><i></i></div><i class="c"></i>`);

define('dashboard-page',`<style>
:host{display:block;width:1897px;height:826px;overflow:hidden;background:#fff}
main{padding:0 16px}
.stats{display:grid;grid-template-columns:repeat(4,1fr);gap:32px}
.cols{display:flex;justify-content:space-between;margin-top:32px}
aside{width:600px;margin-top:-1px}
</style><site-nav></site-nav><main><page-head></page-head>
<div class="stats">
<stat-card accent><app-icon slot="icon" name="gift" size="32"></app-icon><fit-text w="214">Free Loads Remaining</fit-text><fit-text slot="value" w="17">5</fit-text></stat-card>
<stat-card><app-icon slot="icon" name="car" size="32"></app-icon><fit-text w="148">Available Pilots</fit-text><fit-text slot="value" w="17">0</fit-text></stat-card>
<stat-card><app-icon slot="icon" name="list" size="32"></app-icon><fit-text w="110">Active Jobs</fit-text><fit-text slot="value" w="17">0</fit-text></stat-card>
<stat-card><app-icon slot="icon" name="star" size="32"></app-icon><fit-text w="163">Company Rating</fit-text><fit-text slot="value" w="44">4.8</fit-text></stat-card>
</div><div class="cols"><map-panel></map-panel><aside><filter-panel></filter-panel><pilot-panel></pilot-panel></aside></div></main>`);

define('app-window',`<style>
:host{display:block;width:1920px;height:978px;overflow:hidden}
.v{display:flex;height:826px}
</style><browser-chrome></browser-chrome><div class="v"><dashboard-page></dashboard-page><scroll-bar></scroll-bar></div><task-strip></task-strip>`);
</script>
</body>
</html>
